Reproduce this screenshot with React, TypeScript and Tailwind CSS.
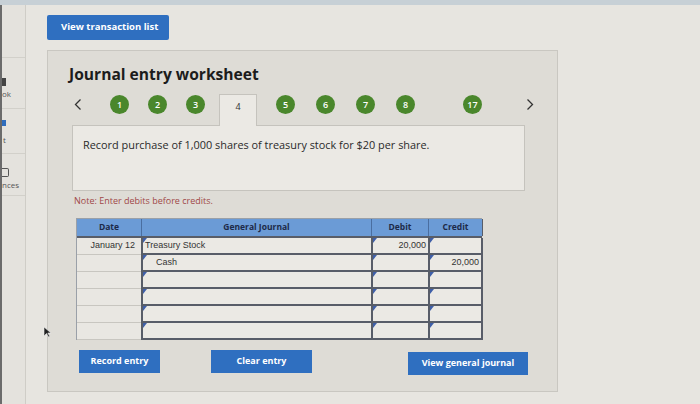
import React from "react";

const font = { fontFamily: '"Open Sans", "Liberation Sans", sans-serif' };
const arial = { fontFamily: '"Liberation Sans", Arial, sans-serif' };

function Step({ n, ml }: { n: string; ml: string }) {
  return (
    <div className={`${ml} mt-[1px] w-[19px] h-[19px] rounded-full bg-[#4a872c] text-white text-[9px] font-semibold flex items-center justify-center shrink-0`}>
      {n}
    </div>
  );
}

function Chevron({ dir, ml }: { dir: "left" | "right"; ml: string }) {
  return (
    <svg className={`${ml} mt-[4px] shrink-0`} width="8" height="13" viewBox="0 0 8 13">
      <path d={dir === "left" ? "M6.5 1.5 L1.5 6.5 L6.5 11.5" : "M1.5 1.5 L6.5 6.5 L1.5 11.5"} fill="none" stroke="#333" strokeWidth="1.3" />
    </svg>
  );
}

function Cell({ text, right = false, indent = false, last = false }: { text?: string; right?: boolean; indent?: boolean; last?: boolean }) {
  return (
    <div className={`relative h-[17px] border-l-2 border-b-2 ${last ? "border-r-2" : ""} border-[#585d68] bg-[#ebe9e4] flex items-center px-[2px] ${right ? "justify-end" : ""}`}>
      <span className="absolute left-0 top-0 w-0 h-0 border-t-[5px] border-t-[#3f5fa8] border-r-[4px] border-r-transparent" />
      <span className={`${indent ? "pl-[11px]" : ""} text-[9px] text-[#333] leading-none`} style={arial}>
        {text}
      </span>
    </div>
  );
}

const rows = [
  { date: "January 12", acct: "Treasury Stock", indent: false, debit: "20,000", credit: "" },
  { date: "", acct: "Cash", indent: true, debit: "", credit: "20,000" },
  { date: "", acct: "", indent: false, debit: "", credit: "" },
  { date: "", acct: "", indent: false, debit: "", credit: "" },
  { date: "", acct: "", indent: false, debit: "", credit: "" },
  { date: "", acct: "", indent: false, debit: "", credit: "" },
];

export default function App() {
  return (
    <div className="w-[700px] h-[404px] overflow-hidden bg-[#e7e5e0] flex flex-col relative" style={font}>
      <div className="h-[5px] bg-[#c7d0d6] shrink-0" />
      <div className="flex flex-1">
        {/* Sidebar (cut off at the window edge) */}
        <div className="w-[26px] shrink-0 border-l-[2px] border-l-[#6b6b6b] border-r border-r-[#cfcdc7] bg-[#e4e2dd] flex flex-col pt-[52px] overflow-hidden">
          <div className="h-[52px] border-y border-[#d2d0ca] flex flex-col justify-end pb-[10px]">
            <div className="w-[4px] h-[8px] bg-[#444] mb-[4px]" />
            <span className="text-[8px] text-[#555] leading-none">ok</span>
          </div>
          <div className="h-[45px] border-b border-[#d2d0ca] flex flex-col justify-end pb-[9px]">
            <div className="w-[4px] h-[6px] bg-[#2f6dbd] mb-[10px]" />
            <span className="text-[8px] text-[#555] leading-none pl-[1px]">t</span>
          </div>
          <div className="h-[42px] border-b border-[#d2d0ca] flex flex-col justify-end pb-[6px]">
            <div className="w-[7px] h-[9px] border border-[#555] border-l-0 rounded-r-[2px] mb-[4px]" />
            <span className="text-[8px] text-[#555] leading-none">nces</span>
          </div>
        </div>

        {/* Main */}
        <div className="flex-1 pl-[21px] pt-[10px] flex flex-col items-start">
          <button className="block w-[122px] h-[25px] bg-[#2f6fc0] rounded-[2px] text-white text-[9.5px] font-bold text-left pl-[14px]">
            View transaction list
          </button>

          <div className="mt-[10px] w-[511px] h-[342px] bg-[#dedcd6] border border-[#c9c7c1] pt-[13px]">
            <h1 className="pl-[21px] text-[15.6px] font-bold text-[#1c1c1c] leading-[20px]">Journal entry worksheet</h1>

            <div className="mt-[10px] h-[31px] flex items-start">
              <Chevron dir="left" ml="ml-[26px]" />
              <Step n="1" ml="ml-[28px]" />
              <Step n="2" ml="ml-[19px]" />
              <Step n="3" ml="ml-[19px]" />
              <div className="ml-[14px] w-[38px] h-[32px] relative z-10 bg-[#ebe9e4] border border-b-0 border-[#c5c3bd] text-[9px] text-[#333] flex justify-center pt-[5px]">
                4
              </div>
              <Step n="5" ml="ml-[19px]" />
              <Step n="6" ml="ml-[21px]" />
              <Step n="7" ml="ml-[21px]" />
              <Step n="8" ml="ml-[21px]" />
              <Step n="17" ml="ml-[48px]" />
              <Chevron dir="right" ml="ml-[44px]" />
            </div>

            <div className="ml-[24px] w-[453px] h-[66px] bg-[#ebe9e4] border border-[#c5c3bd] pl-[10px] pt-[11px]">
              <p className="text-[10.9px] text-[#2a2a2a]">Record purchase of 1,000 shares of treasury stock for $20 per share.</p>
            </div>

            <p className="ml-[26px] mt-[3px] text-[9px] text-[#a04848]">Note: Enter debits before credits.</p>

            <div className="ml-[28px] mt-[10px] w-[406px] border-l border-t border-[#9aa0a8]">
              <div className="h-[19px] bg-[#6b9bd6] grid grid-cols-[64px_230px_57px_55px] text-[8.5px] font-bold text-[#1d2a48] border-b-2 border-[#585d68]">
                <div className="flex items-center justify-center">Date</div>
                <div className="flex items-center justify-center border-l border-[#4a6ea0]">General Journal</div>
                <div className="flex items-center justify-center border-l border-[#4a6ea0]">Debit</div>
                <div className="flex items-center justify-center border-l border-[#4a6ea0] border-r border-r-[#585d68]">Credit</div>
              </div>
              {rows.map((r, i) => (
                <div key={i} className="grid grid-cols-[64px_230px_57px_55px]">
                  <div className="h-[17px] bg-[#e9e7e2] border-b border-[#c8c6c0] flex items-center justify-end pr-[6px] text-[9px] text-[#333]" style={arial}>
                    {r.date}
                  </div>
                  <Cell text={r.acct} indent={r.indent} />
                  <Cell text={r.debit} right />
                  <Cell text={r.credit} right last />
                </div>
              ))}
            </div>

            <div className="mt-[10px] flex items-start">
              <button className="ml-[31px] w-[81px] h-[23px] bg-[#2f6fc0] text-white text-[9px] font-bold">Record entry</button>
              <button className="ml-[51px] w-[101px] h-[23px] bg-[#2f6fc0] text-white text-[9px] font-bold">Clear entry</button>
              <button className="ml-[96px] mt-[2px] w-[120px] h-[23px] bg-[#2f6fc0] text-white text-[9px] font-bold">View general journal</button>
            </div>
          </div>
        </div>
      </div>

      {/* mouse cursor */}
      <svg className="absolute left-[43px] top-[326px]" width="9" height="12" viewBox="0 0 9 12">
        <path d="M1 1 L1 10 L3.5 7.5 L5.5 11 L6.8 10.3 L4.8 7 L8 7 Z" fill="#222" stroke="#eee" strokeWidth="0.6" />
      </svg>
    </div>
  );
}
